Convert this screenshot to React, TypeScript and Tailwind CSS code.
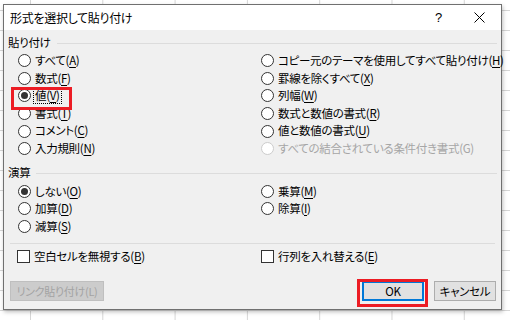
import type { ReactNode } from "react";

const font =
  "font-['Meiryo_UI','Noto_Sans_CJK_JP',sans-serif] [font-feature-settings:'palt']";

function Key({ label, k }: { label: string; k: string }) {
  return (
    <span>
      {label}(<u className="underline-offset-2">{k}</u>)
    </span>
  );
}

function Radio({
  checked,
  disabled,
  children,
}: {
  checked?: boolean;
  disabled?: boolean;
  children: ReactNode;
}) {
  return (
    <div
      className={`h-[17.6px] flex items-center gap-[4px] whitespace-nowrap ${
        disabled ? "text-[#a6a6a6]" : "text-black"
      }`}
    >
      <span
        className={`w-[13px] h-[13px] rounded-full border bg-white flex items-center justify-center shrink-0 ${
          disabled ? "border-[#cccccc]" : "border-[#333333]"
        }`}
      >
        {checked && <span className="w-[7px] h-[7px] rounded-full bg-[#333333]" />}
      </span>
      {children}
    </div>
  );
}

function Check({ children }: { children: ReactNode }) {
  return (
    <div className="h-[17px] flex items-center gap-[4px] whitespace-nowrap">
      <span className="w-[13px] h-[13px] border border-[#333333] bg-white shrink-0" />
      {children}
    </div>
  );
}

function GroupLabel({ text }: { text: string }) {
  return (
    <div className="flex items-center gap-[6px] pl-[4px] pr-[4px]">
      <span>{text}</span>
      <span className="flex-1 h-px bg-[#dcdcdc]" />
    </div>
  );
}

export default function App() {
  return (
    <div
      className={`w-[510px] h-[320px] overflow-hidden bg-white bg-[linear-gradient(to_right,#d6d6d6_1px,transparent_1px),linear-gradient(to_bottom,#d6d6d6_1px,transparent_1px)] bg-[size:72.3px_20px] bg-[position:30px_10px] pt-[4px] pl-[3px] text-[11.5px] tracking-[-0.3px] leading-none ${font}`}
    >
      <div className="relative w-[499px] h-[306px] border border-[#707070] bg-[#f0f0f0] flex flex-col shadow-[1px_2px_4px_rgba(0,0,0,0.25)]">
        {/* title bar */}
        <div className="h-[25px] shrink-0 bg-white flex items-center pl-[6px] text-black text-[12px]">
          <span>形式を選択して貼り付け</span>
          <span className="ml-auto mr-[32px] text-[13px] font-['Liberation_Sans',sans-serif]">?</span>
          <svg width="11" height="11" viewBox="0 0 11 11" className="mr-[16px]">
            <path d="M0.5 0.5 L10.5 10.5 M10.5 0.5 L0.5 10.5" stroke="#000" strokeWidth="1" />
          </svg>
        </div>

        {/* body */}
        <div className="flex flex-col pt-[4px]">
          <div className="h-[18px] flex flex-col justify-center">
            <GroupLabel text="貼り付け" />
          </div>
          <div className="flex pl-[14px]">
            <div className="w-[243px] shrink-0 flex flex-col">
              <Radio><Key label="すべて" k="A" /></Radio>
              <Radio><Key label="数式" k="F" /></Radio>
              <Radio checked>
                <span className="outline outline-1 outline-dotted outline-black outline-offset-[1px]">
                  <Key label="値" k="V" />
                </span>
              </Radio>
              <Radio><Key label="書式" k="T" /></Radio>
              <Radio><Key label="コメント" k="C" /></Radio>
              <Radio><Key label="入力規則" k="N" /></Radio>
            </div>
            <div className="flex flex-col">
              <Radio><Key label="コピー元のテーマを使用してすべて貼り付け" k="H" /></Radio>
              <Radio><Key label="罫線を除くすべて" k="X" /></Radio>
              <Radio><Key label="列幅" k="W" /></Radio>
              <Radio><Key label="数式と数値の書式" k="R" /></Radio>
              <Radio><Key label="値と数値の書式" k="U" /></Radio>
              <Radio disabled>すべての結合されている条件付き書式(G)</Radio>
            </div>
          </div>

          <div className="h-[19px] mt-[6px] flex flex-col justify-center">
            <GroupLabel text="演算" />
          </div>
          <div className="flex pl-[14px]">
            <div className="w-[243px] shrink-0 flex flex-col">
              <Radio checked><Key label="しない" k="O" /></Radio>
              <Radio><Key label="加算" k="D" /></Radio>
              <Radio><Key label="減算" k="S" /></Radio>
            </div>
            <div className="flex flex-col">
              <Radio><Key label="乗算" k="M" /></Radio>
              <Radio><Key label="除算" k="I" /></Radio>
            </div>
          </div>

          <div className="mt-[8px] mx-[6px] h-px bg-[#dcdcdc]" />

          <div className="flex pl-[13px] mt-[4px]">
            <div className="w-[244px] shrink-0">
              <Check><Key label="空白セルを無視する" k="B" /></Check>
            </div>
            <Check><Key label="行列を入れ替える" k="E" /></Check>
          </div>

          <div className="flex items-center mt-[16px] pl-[6px] pr-[5px]">
            <div className="w-[94px] h-[20px] bg-[#cccccc] border border-[#bfbfbf] text-[#a3a3a3] flex items-center justify-center whitespace-nowrap text-[11px]">
              リンク貼り付け(L)
            </div>
            <div className="ml-auto w-[62px] h-[20px] bg-[#e1e1e1] border-2 border-[#0078d7] flex items-center justify-center text-black">
              OK
            </div>
            <div className="ml-[10px] w-[62px] h-[20px] bg-[#e1e1e1] border border-[#adadad] flex items-center justify-center text-black">
              キャンセル
            </div>
          </div>
        </div>

        {/* red highlight boxes */}
        <div className="absolute left-[7px] top-[82px] w-[61px] h-[23px] border-[3px] border-[#ec1c24]" />
        <div className="absolute left-[353px] top-[274px] w-[71px] h-[28px] border-[3px] border-[#ec1c24]" />
      </div>
    </div>
  );
}
